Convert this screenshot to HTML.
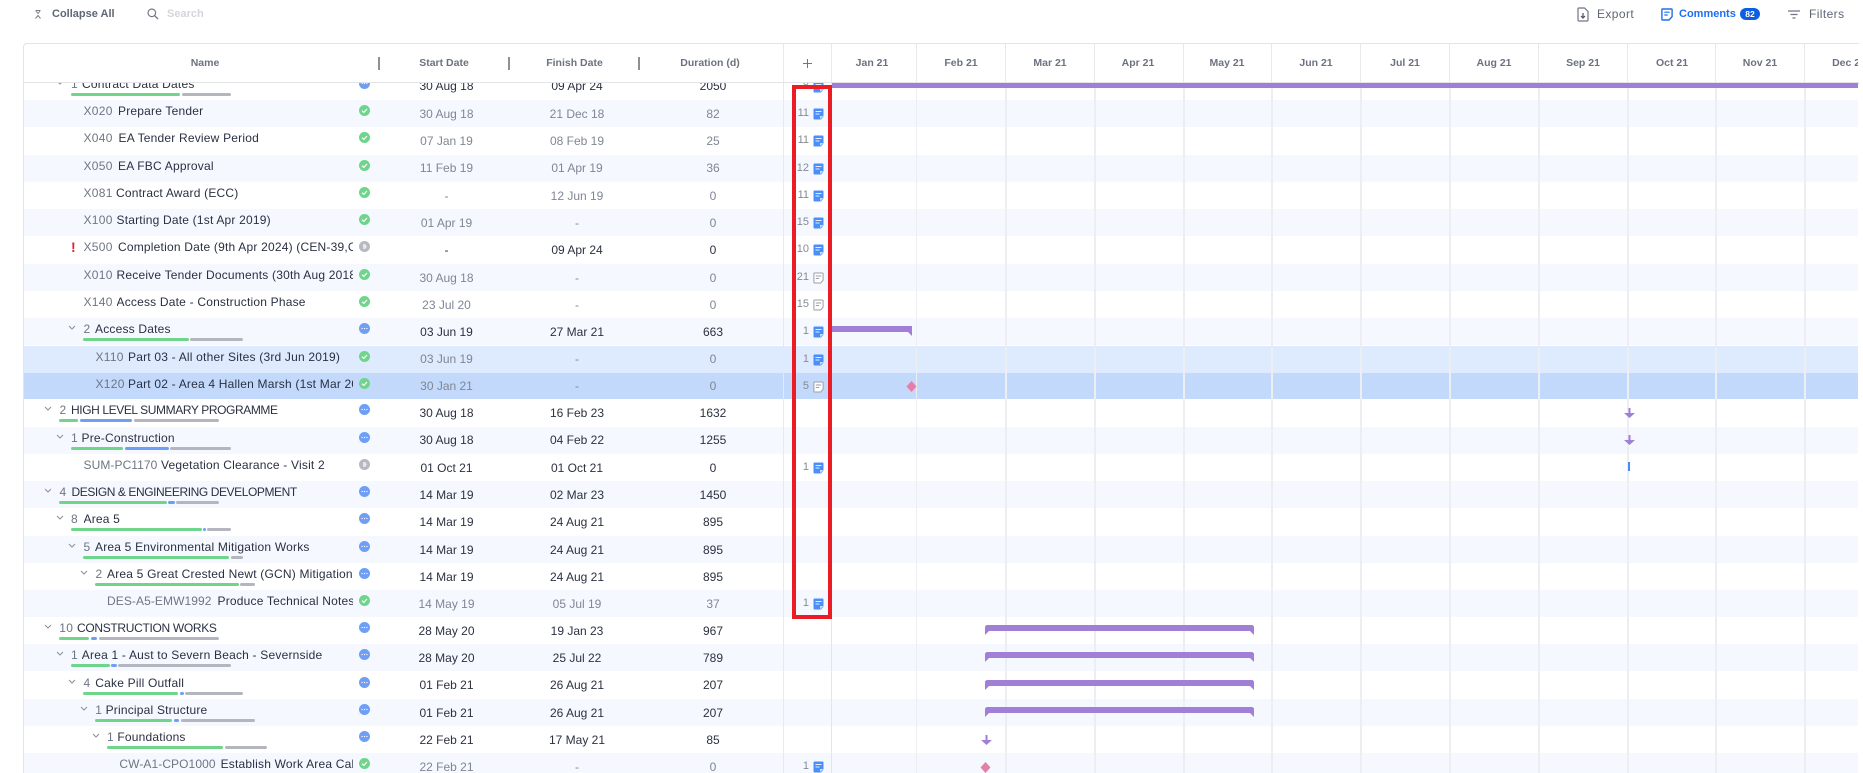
<!DOCTYPE html>
<html><head><meta charset="utf-8"><style>
html,body{margin:0;padding:0;background:#fff;width:1863px;height:773px;overflow:hidden;font-family:"Liberation Sans",sans-serif}
i,b{font-style:normal;font-weight:400}
#p{position:absolute;left:0;top:0;width:1863px;height:773px;overflow:hidden}
.a{position:absolute}
.tb{position:absolute;top:7px;font-size:11px;line-height:14px;font-weight:700;color:#5f6675;white-space:nowrap}
.tr{font-size:12px;font-weight:400;letter-spacing:.4px}
.hd{position:absolute;left:23px;top:43px;width:1835px;height:38px;border:1px solid #e2e4e8;border-right:0;border-bottom:2px solid #e2e4e8;border-top-left-radius:4px;box-sizing:content-box}
.h{position:absolute;top:56px;font-size:10.5px;line-height:14px;font-weight:700;color:#6b7280;white-space:nowrap;transform:translateX(-50%)}
.sp{position:absolute;top:57px;width:2px;height:13px;background:#8a8f98}
.hl{position:absolute;top:44px;width:1px;height:38px;background:#e8e9ec}
#b{position:absolute;left:0;top:0;width:1863px;height:773px;clip-path:inset(83px 5px 0 24px)}
.r{position:absolute;left:0;width:1863px;height:27.2px;background:#fff}
.r.t::before,.r.x::before,.r.y::before{content:"";position:absolute;left:0;top:0;width:1863px;height:100%}
.r.t::before{background:#f5f8fe}
.r.x::before{background:#deeafd}
.r.y::before{background:#c2d9fc}
.c,.n,.d,.k{position:absolute;white-space:nowrap;font-size:12px;line-height:14px}
.c{top:4.3px;color:#6e7583;letter-spacing:.28px}
.lc{letter-spacing:.08px}
.n{top:4.3px;color:#2a3042;letter-spacing:.2px;overflow:hidden}
.d{top:6.5px;text-align:center;color:#7f8694}
.D{color:#2c3140}
.s{left:396.500px;width:100px}
.f{left:527px;width:100px}
.u{left:673px;width:80px}
.k{top:6px;left:784px;width:25px;text-align:right;font-size:11px;color:#858a94}
.st{position:absolute;left:359px;top:5.300px;width:11px;height:11px}
.nt{position:absolute;left:813px;top:8px;width:11px;height:12px}
.ch{position:absolute;top:7px;width:8px;height:6px}
.br{position:absolute;top:20px;height:3px;border-radius:1.5px}
.G{background:#6ed58b}.B{background:#6e9ff5}.Y{background:#b3b6bf}
.gl{position:absolute;top:83px;height:690px;width:2px;background:#eceef1}
</style></head><body>
<svg width="0" height="0" style="position:absolute">
<symbol id="ok" viewBox="0 0 11 11"><circle cx="5.500" cy="5.500" r="5.500" fill="#6ed58b"/><path d="M3 5.700L4.800 7.400 8 4" fill="none" stroke="#fff" stroke-width="1.200"/></symbol>
<symbol id="mo" viewBox="0 0 11 11"><circle cx="5.500" cy="5.500" r="5.500" fill="#6f9ff5"/><circle cx="3.100" cy="5.500" r=".65" fill="#fff"/><circle cx="5.500" cy="5.500" r=".65" fill="#fff"/><circle cx="7.900" cy="5.500" r=".65" fill="#fff"/></symbol>
<symbol id="pe" viewBox="0 0 11 11"><circle cx="5.500" cy="5.500" r="5.500" fill="#b7b9c0"/><path d="M4 3h2.200l1.800 2.500L6.200 8H4z" fill="#e6e7ea"/></symbol>
<symbol id="nb" viewBox="0 0 11 12"><path d="M1.500 0.500h8a1 1 0 0 1 1 1v7l-2.600 3h-6.400a1 1 0 0 1-1-1v-9a1 1 0 0 1 1-1z" fill="#4a8ff9"/><path d="M2.500 3.500h6M2.500 6h4" stroke="#e4eefe" stroke-width=".9"/><path d="M7 11V8h3.500z" fill="#c9ddfd"/></symbol>
<symbol id="ng" viewBox="0 0 11 12"><path d="M1.500 1h8a.6.6 0 0 1 .6.600v6.600L7.700 11H1.500a.6.6 0 0 1-.6-.6V1.600A.6.6 0 0 1 1.500 1z" fill="#fff" stroke="#9a9ea8" stroke-width="1"/><path d="M2.800 4h5.400M2.800 6.500h3.400" stroke="#9a9ea8" stroke-width="1"/></symbol>
<symbol id="cv" viewBox="0 0 8 6"><path d="M1 1l3 3 3-3" fill="none" stroke="#8a8f9a" stroke-width="1"/></symbol>
</svg>
<div id="p">
<svg class="a" style="left:35px;top:10px" width="6" height="9" viewBox="0 0 6 9"><path d="M.5 .5h5M1 1l2 2.500 2-2.500M.5 8.500L3 5.500l2.500 3" fill="none" stroke="#777d8a" stroke-width="1"/></svg>
<div class="tb" style="left:52px">Collapse All</div>
<svg class="a" style="left:147px;top:8px" width="12" height="12" viewBox="0 0 12 12"><circle cx="4.800" cy="4.800" r="3.800" fill="none" stroke="#727885" stroke-width="1.200"/><path d="M7.600 7.600L11 11" stroke="#727885" stroke-width="1.300"/></svg>
<div class="tb" style="left:167px;color:#d3d6dd">Search</div>
<svg class="a" style="left:1577px;top:7px" width="12" height="15" viewBox="0 0 12 15"><path d="M1.500 1h6L11 4.500V13a1 1 0 0 1-1 1H2a1 1 0 0 1-1-1V1.500z" fill="none" stroke="#70757f" stroke-width="1.200"/><path d="M6 6v5M4 9l2 2 2-2" fill="none" stroke="#4c515a" stroke-width="1.200"/></svg>
<div class="tb tr" style="left:1597px;color:#5f6675">Export</div>
<svg class="a" style="left:1661px;top:8px" width="12" height="13" viewBox="0 0 12 13"><path d="M1.500 1h9a.6.6 0 0 1 .6.600v7L8 12H1.500a.6.6 0 0 1-.6-.6V1.600A.6.6 0 0 1 1.500 1z" fill="none" stroke="#1f6fee" stroke-width="1.400"/><path d="M3.300 4.200h5.400M3.300 7h3.400" stroke="#1f6fee" stroke-width="1.200"/></svg>
<div class="tb" style="left:1679px;color:#1f6fee">Comments</div>
<div class="a" style="left:1740px;top:8px;width:20px;height:12px;border-radius:6px;background:#0b5fe0;color:#fff;font-size:8.500px;font-weight:700;line-height:12px;text-align:center">82</div>
<svg class="a" style="left:1788px;top:10px" width="12" height="9" viewBox="0 0 12 9"><path d="M0 1h12M2.500 4.500h7M4.500 8h3" stroke="#6f7582" stroke-width="1.300"/></svg>
<div class="tb tr" style="left:1809px">Filters</div>

<div class="hd"></div>
<div class="h" style="left:205px">Name</div><div class="h" style="left:444px">Start Date</div><div class="h" style="left:574.500px">Finish Date</div><div class="h" style="left:710px">Duration (d)</div>
<div class="sp" style="left:378px"></div><div class="sp" style="left:508px"></div><div class="sp" style="left:638px"></div>
<div class="hl" style="left:783px"></div><div class="hl" style="left:831px"></div><div class="hl" style="left:916px"></div><div class="hl" style="left:1005px"></div><div class="hl" style="left:1094px"></div><div class="hl" style="left:1183px"></div><div class="hl" style="left:1271px"></div><div class="hl" style="left:1360px"></div><div class="hl" style="left:1449px"></div><div class="hl" style="left:1538px"></div><div class="hl" style="left:1627px"></div><div class="hl" style="left:1715px"></div><div class="hl" style="left:1804px"></div>
<svg class="a" style="left:802px;top:58px" width="11" height="11" viewBox="0 0 11 11"><path d="M5.500 1v9M1 5.500h9" stroke="#70757f" stroke-width="1"/></svg>
<div class="h" style="left:872px">Jan 21</div><div class="h" style="left:961px">Feb 21</div><div class="h" style="left:1050px">Mar 21</div><div class="h" style="left:1138px">Apr 21</div><div class="h" style="left:1227px">May 21</div><div class="h" style="left:1316px">Jun 21</div><div class="h" style="left:1405px">Jul 21</div><div class="h" style="left:1494px">Aug 21</div><div class="h" style="left:1583px">Sep 21</div><div class="h" style="left:1672px">Oct 21</div><div class="h" style="left:1760px">Nov 21</div>
<div style="position:absolute;left:0;top:0;width:1858px;height:80px;overflow:hidden"><div class="h" style="left:1849px">Dec 21</div></div>

<div id="b">
<div class="r" style="top:72.800px"><svg class="ch" style="left:56px"><use href="#cv"/></svg><i class="c" style="left:71px">1</i><b class="n" style="left:82px">Contract Data Dates</b><svg class="st"><use href="#mo"/></svg><i class="d s D">30 Aug 18</i><i class="d f D">09 Apr 24</i><i class="d u D">2050</i><i class="k">8</i><svg class="nt"><use href="#nb"/></svg><i class="br G" style="left:71px;width:109px"></i><i class="br Y" style="left:182px;width:49px"></i></div>
<div class="r t" style="top:100px"><i class="c" style="left:83.500px">X020</i><b class="n" style="left:118px">Prepare Tender</b><svg class="st"><use href="#ok"/></svg><i class="d s">30 Aug 18</i><i class="d f">21 Dec 18</i><i class="d u">82</i><i class="k">11</i><svg class="nt"><use href="#nb"/></svg></div>
<div class="r" style="top:127.200px"><i class="c" style="left:83.500px">X040</i><b class="n" style="left:118.500px">EA Tender Review Period</b><svg class="st"><use href="#ok"/></svg><i class="d s">07 Jan 19</i><i class="d f">08 Feb 19</i><i class="d u">25</i><i class="k">11</i><svg class="nt"><use href="#nb"/></svg></div>
<div class="r t" style="top:154.800px"><i class="c" style="left:83.500px">X050</i><b class="n" style="left:118px">EA FBC Approval</b><svg class="st"><use href="#ok"/></svg><i class="d s">11 Feb 19</i><i class="d f">01 Apr 19</i><i class="d u">36</i><i class="k">12</i><svg class="nt"><use href="#nb"/></svg></div>
<div class="r" style="top:182px"><i class="c" style="left:83.500px">X081</i><b class="n" style="left:116px">Contract Award (ECC)</b><svg class="st"><use href="#ok"/></svg><i class="d s">-</i><i class="d f">12 Jun 19</i><i class="d u">0</i><i class="k">11</i><svg class="nt"><use href="#nb"/></svg></div>
<div class="r t" style="top:209px"><i class="c" style="left:83.500px">X100</i><b class="n" style="left:116.500px">Starting Date (1st Apr 2019)</b><svg class="st"><use href="#ok"/></svg><i class="d s">01 Apr 19</i><i class="d f">-</i><i class="d u">0</i><i class="k">15</i><svg class="nt"><use href="#nb"/></svg></div>
<div class="r" style="top:236.200px"><i class="c" style="left:71px;color:#e3202c;font-weight:700;font-size:14px">!</i><i class="c" style="left:83.500px">X500</i><b class="n" style="left:118px;width:235px">Completion Date (9th Apr 2024) (CEN-39,CEN-40)</b><svg class="st"><use href="#pe"/></svg><i class="d s D">-</i><i class="d f D">09 Apr 24</i><i class="d u D">0</i><i class="k">10</i><svg class="nt"><use href="#nb"/></svg></div>
<div class="r t" style="top:264px"><i class="c" style="left:83.500px">X010</i><b class="n" style="left:116.500px;width:236px">Receive Tender Documents (30th Aug 2018)</b><svg class="st"><use href="#ok"/></svg><i class="d s">30 Aug 18</i><i class="d f">-</i><i class="d u">0</i><i class="k">21</i><svg class="nt"><use href="#ng"/></svg></div>
<div class="r" style="top:291px"><i class="c" style="left:83.500px">X140</i><b class="n" style="left:116.500px">Access Date - Construction Phase</b><svg class="st"><use href="#ok"/></svg><i class="d s">23 Jul 20</i><i class="d f">-</i><i class="d u">0</i><i class="k">15</i><svg class="nt"><use href="#ng"/></svg></div>
<div class="r t" style="top:318px"><svg class="ch" style="left:68px"><use href="#cv"/></svg><i class="c" style="left:83.500px">2</i><b class="n" style="left:95px">Access Dates</b><svg class="st"><use href="#mo"/></svg><i class="d s D">03 Jun 19</i><i class="d f D">27 Mar 21</i><i class="d u D">663</i><i class="k">1</i><svg class="nt"><use href="#nb"/></svg><i class="br G" style="left:83px;width:106px"></i><i class="br Y" style="left:190px;width:53px"></i></div>
<div class="r x" style="top:345.500px"><i class="c" style="left:95.500px">X110</i><b class="n" style="left:128px">Part 03 - All other Sites (3rd Jun 2019)</b><svg class="st"><use href="#ok"/></svg><i class="d s">03 Jun 19</i><i class="d f">-</i><i class="d u">0</i><i class="k">1</i><svg class="nt"><use href="#nb"/></svg></div>
<div class="r y" style="top:372.500px"><i class="c" style="left:95.500px">X120</i><b class="n" style="left:128px;width:225px">Part 02 - Area 4 Hallen Marsh (1st Mar 2021)</b><svg class="st"><use href="#ok"/></svg><i class="d s">30 Jan 21</i><i class="d f">-</i><i class="d u">0</i><i class="k">5</i><svg class="nt"><use href="#ng"/></svg></div>
<div class="r" style="top:399px"><svg class="ch" style="left:44px"><use href="#cv"/></svg><i class="c" style="left:59.500px">2</i><b class="n" style="left:71px;letter-spacing:-.4px">HIGH LEVEL SUMMARY PROGRAMME</b><svg class="st"><use href="#mo"/></svg><i class="d s D">30 Aug 18</i><i class="d f D">16 Feb 23</i><i class="d u D">1632</i><i class="br G" style="left:59px;width:19px"></i><i class="br B" style="left:80px;width:52px"></i><i class="br Y" style="left:134px;width:85px"></i></div>
<div class="r t" style="top:426.500px"><svg class="ch" style="left:56px"><use href="#cv"/></svg><i class="c" style="left:71px">1</i><b class="n" style="left:81.500px">Pre-Construction</b><svg class="st"><use href="#mo"/></svg><i class="d s D">30 Aug 18</i><i class="d f D">04 Feb 22</i><i class="d u D">1255</i><i class="br G" style="left:71px;width:52px"></i><i class="br B" style="left:125px;width:44px"></i><i class="br Y" style="left:170px;width:61px"></i></div>
<div class="r" style="top:454px"><i class="c lc" style="left:83.500px">SUM-PC1170</i><b class="n" style="left:161px">Vegetation Clearance - Visit 2</b><svg class="st"><use href="#pe"/></svg><i class="d s D">01 Oct 21</i><i class="d f D">01 Oct 21</i><i class="d u D">0</i><i class="k">1</i><svg class="nt"><use href="#nb"/></svg></div>
<div class="r t" style="top:481px"><svg class="ch" style="left:44px"><use href="#cv"/></svg><i class="c" style="left:59.500px">4</i><b class="n" style="left:71.500px;letter-spacing:-.42px">DESIGN &amp; ENGINEERING DEVELOPMENT</b><svg class="st"><use href="#mo"/></svg><i class="d s D">14 Mar 19</i><i class="d f D">02 Mar 23</i><i class="d u D">1450</i><i class="br G" style="left:59px;width:108px"></i><i class="br B" style="left:168px;width:7px"></i><i class="br Y" style="left:176px;width:43px"></i></div>
<div class="r" style="top:508px"><svg class="ch" style="left:56px"><use href="#cv"/></svg><i class="c" style="left:71px">8</i><b class="n" style="left:83.500px">Area 5</b><svg class="st"><use href="#mo"/></svg><i class="d s D">14 Mar 19</i><i class="d f D">24 Aug 21</i><i class="d u D">895</i><i class="br G" style="left:71px;width:131px"></i><i class="br B" style="left:203px;width:3px"></i><i class="br Y" style="left:207px;width:24px"></i></div>
<div class="r t" style="top:536px"><svg class="ch" style="left:68px"><use href="#cv"/></svg><i class="c" style="left:83.500px">5</i><b class="n" style="left:95px">Area 5 Environmental Mitigation Works</b><svg class="st"><use href="#mo"/></svg><i class="d s D">14 Mar 19</i><i class="d f D">24 Aug 21</i><i class="d u D">895</i><i class="br G" style="left:83px;width:146px"></i><i class="br Y" style="left:231px;width:12px"></i></div>
<div class="r" style="top:563px"><svg class="ch" style="left:80px"><use href="#cv"/></svg><i class="c" style="left:95.500px">2</i><b class="n" style="left:107px;width:246px">Area 5 Great Crested Newt (GCN) Mitigation Works</b><svg class="st"><use href="#mo"/></svg><i class="d s D">14 Mar 19</i><i class="d f D">24 Aug 21</i><i class="d u D">895</i><i class="br G" style="left:95px;width:144px"></i><i class="br Y" style="left:240px;width:15px"></i></div>
<div class="r t" style="top:590px"><i class="c lc" style="left:107px">DES-A5-EMW1992</i><b class="n" style="left:217.500px;width:135px">Produce Technical Notes for GCN</b><svg class="st"><use href="#ok"/></svg><i class="d s">14 May 19</i><i class="d f">05 Jul 19</i><i class="d u">37</i><i class="k">1</i><svg class="nt"><use href="#nb"/></svg></div>
<div class="r" style="top:617px"><svg class="ch" style="left:44px"><use href="#cv"/></svg><i class="c" style="left:59.300px">10</i><b class="n" style="left:77px;letter-spacing:-.32px">CONSTRUCTION WORKS</b><svg class="st"><use href="#mo"/></svg><i class="d s D">28 May 20</i><i class="d f D">19 Jan 23</i><i class="d u D">967</i><i class="br G" style="left:59px;width:30px"></i><i class="br B" style="left:91px;width:6px"></i><i class="br Y" style="left:99px;width:120px"></i></div>
<div class="r t" style="top:644px"><svg class="ch" style="left:56px"><use href="#cv"/></svg><i class="c" style="left:71px">1</i><b class="n" style="left:81.800px">Area 1 - Aust to Severn Beach - Severnside</b><svg class="st"><use href="#mo"/></svg><i class="d s D">28 May 20</i><i class="d f D">25 Jul 22</i><i class="d u D">789</i><i class="br G" style="left:71px;width:38.500px"></i><i class="br B" style="left:111px;width:6px"></i><i class="br Y" style="left:118px;width:113px"></i></div>
<div class="r" style="top:671.500px"><svg class="ch" style="left:68px"><use href="#cv"/></svg><i class="c" style="left:83.500px">4</i><b class="n" style="left:95.300px">Cake Pill Outfall</b><svg class="st"><use href="#mo"/></svg><i class="d s D">01 Feb 21</i><i class="d f D">26 Aug 21</i><i class="d u D">207</i><i class="br G" style="left:83px;width:95px"></i><i class="br B" style="left:180px;width:4px"></i><i class="br Y" style="left:185px;width:58px"></i></div>
<div class="r t" style="top:699px"><svg class="ch" style="left:80px"><use href="#cv"/></svg><i class="c" style="left:95.300px">1</i><b class="n" style="left:105.600px">Principal Structure</b><svg class="st"><use href="#mo"/></svg><i class="d s D">01 Feb 21</i><i class="d f D">26 Aug 21</i><i class="d u D">207</i><i class="br G" style="left:95px;width:77px"></i><i class="br B" style="left:174px;width:5px"></i><i class="br Y" style="left:181px;width:74px"></i></div>
<div class="r" style="top:726px"><svg class="ch" style="left:92px"><use href="#cv"/></svg><i class="c" style="left:107px">1</i><b class="n" style="left:117.400px">Foundations</b><svg class="st"><use href="#mo"/></svg><i class="d s D">22 Feb 21</i><i class="d f D">17 May 21</i><i class="d u D">85</i><i class="br G" style="left:107px;width:116px"></i><i class="br Y" style="left:225px;width:42px"></i></div>
<div class="r t" style="top:753px;height:20px"><i class="c lc" style="left:119.400px">CW-A1-CPO1000</i><b class="n" style="left:220.600px;width:132px">Establish Work Area Caloon</b><svg class="st"><use href="#ok"/></svg><i class="d s">22 Feb 21</i><i class="d f">-</i><i class="d u">0</i><i class="k">1</i><svg class="nt"><use href="#nb"/></svg></div>

<div class="gl" style="left:783px;width:1px;background:#e8e9ec"></div><div class="gl" style="left:831px;width:1px;background:#e4e5e8"></div>
<div class="gl" style="left:916px;width:1px"></div><div class="gl" style="left:1005px"></div><div class="gl" style="left:1094px"></div><div class="gl" style="left:1183px"></div><div class="gl" style="left:1271px"></div><div class="gl" style="left:1360px"></div><div class="gl" style="left:1449px"></div><div class="gl" style="left:1538px"></div><div class="gl" style="left:1627px"></div><div class="gl" style="left:1715px"></div><div class="gl" style="left:1804px"></div>

<div class="a" style="left:832px;top:83px;width:1026px;height:4.500px;background:#a17fd6"></div>
<svg class="a" style="left:831px;top:326px" width="82" height="10" viewBox="0 0 82 10"><path d="M0 0h81v10l-4-4H0z" fill="#a17fd6"/></svg>
<svg class="a" style="left:985px;top:625px" width="269" height="10" viewBox="0 0 269 10"><path d="M0 10V1.500L1.500 0h266l1.500 1.500V10l-4-4H4z" fill="#a17fd6"/></svg>
<svg class="a" style="left:985px;top:652px" width="269" height="10" viewBox="0 0 269 10"><path d="M0 10V1.500L1.500 0h266l1.500 1.500V10l-4-4H4z" fill="#a17fd6"/></svg>
<svg class="a" style="left:985px;top:680px" width="269" height="10" viewBox="0 0 269 10"><path d="M0 10V1.500L1.500 0h266l1.500 1.500V10l-4-4H4z" fill="#a17fd6"/></svg>
<svg class="a" style="left:985px;top:707px" width="269" height="10" viewBox="0 0 269 10"><path d="M0 10V1.500L1.500 0h266l1.500 1.500V10l-4-4H4z" fill="#a17fd6"/></svg>
<svg class="a" style="left:906px;top:381px" width="11" height="11" viewBox="0 0 11 11"><path d="M5.500 0L10.500 5.500 5.500 11 .5 5.500z" fill="#e77ea8"/></svg>
<svg class="a" style="left:980px;top:762px" width="11" height="11" viewBox="0 0 11 11"><path d="M5.500 0L10.500 5.500 5.500 11 .5 5.500z" fill="#e77ea8"/></svg>
<svg class="a" style="left:1624px;top:408px" width="11" height="10" viewBox="0 0 11 10"><path d="M4.500 0h2v5H11L5.500 10 0 5h4.500z" fill="#a17fd6"/></svg>
<svg class="a" style="left:1624px;top:435px" width="11" height="10" viewBox="0 0 11 10"><path d="M4.500 0h2v5H11L5.500 10 0 5h4.500z" fill="#a17fd6"/></svg>
<svg class="a" style="left:981px;top:735px" width="11" height="10" viewBox="0 0 11 10"><path d="M4.500 0h2v5H11L5.500 10 0 5h4.500z" fill="#a17fd6"/></svg>
<div class="a" style="left:1628px;top:462px;width:2px;height:9px;background:#4a8cf7"></div>
</div>
<div class="a" style="left:23px;top:82px;width:1px;height:691px;background:#e2e4e8"></div>
<div class="a" style="left:792px;top:85px;width:32px;height:526px;border:4px solid #ec1c24"></div>
</div>
</body></html>
